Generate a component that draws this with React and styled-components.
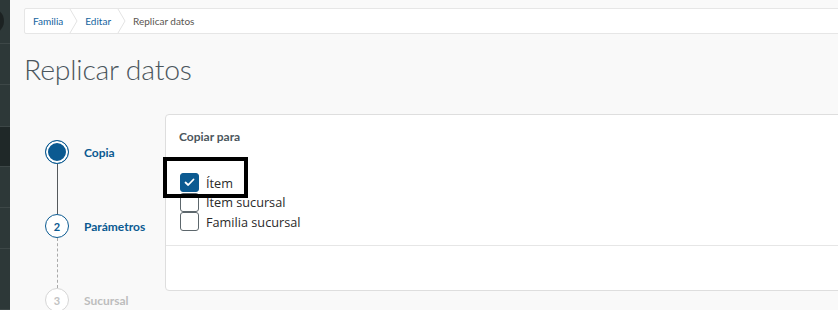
import React from "react";
import styled, { createGlobalStyle } from "styled-components";

const Global = createGlobalStyle`
  html, body { margin: 0; padding: 0; background: #f9f9f9; overflow: hidden; }
  body { font-family: "Lato", "Open Sans", sans-serif; width: 838px; height: 310px; }
  * { box-sizing: border-box; }
`;

const Shell = styled.div`
  display: flex;
  width: 838px;
  height: 310px;
  overflow: hidden;
`;

const Sidebar = styled.nav`
  width: 10px;
  flex: none;
  background: #2d3838;
  display: flex;
  flex-direction: column;
  position: relative;
  overflow: hidden;
`;

const SideItem = styled.div`
  height: ${(p) => p.$h}px;
  flex: none;
  background: ${(p) => (p.$active ? "#1f2828" : "#2d3838")};
  border-bottom: 1px solid #3d4747;
`;

const Avatar = styled.span`
  position: absolute;
  left: -22px;
  top: 8px;
  width: 26px;
  height: 26px;
  border-radius: 50%;
  background: #1c2222;
`;

const Main = styled.main`
  flex: 1;
  padding: 8px 0 0 14px;
  display: flex;
  flex-direction: column;
  margin-right: -6px;
`;

const Breadcrumb = styled.ol`
  list-style: none;
  margin: 0;
  padding: 0 0 0 8px;
  height: 26px;
  background: #fff;
  border: 1px solid #e6e6e6;
  border-radius: 2px;
  display: flex;
  align-items: center;
  font-size: 10px;
`;

const Crumb = styled.li`
  display: flex;
  align-items: center;
  color: ${(p) => (p.$current ? "#5a5650" : "#1464a0")};
  height: 100%;
`;

const Chevron = styled.svg`
  width: 10px;
  height: 24px;
  margin: 0 6px 0 6px;
  flex: none;
`;

const Title = styled.h1`
  margin: 15px 0 0 0;
  font-weight: 300;
  font-size: 28.4px;
  line-height: 40px;
  color: #4b565d;
  letter-spacing: -0.2px;
`;

const Content = styled.div`
  display: flex;
  margin-top: 25px;
`;

const Stepper = styled.ol`
  list-style: none;
  margin: 26px 0 0 0;
  padding: 0 0 0 21px;
  width: 141px;
  flex: none;
  display: flex;
  flex-direction: column;
`;

const Step = styled.li`
  display: flex;
  align-items: center;
  gap: 15px;
`;

const Circle = styled.span`
  width: 24px;
  height: 24px;
  border-radius: 50%;
  flex: none;
  display: flex;
  align-items: center;
  justify-content: center;
  font-size: 11px;
  font-weight: 700;
  border: 1.5px solid ${(p) => (p.$state === "todo" ? "#d6d6d6" : "#0b5a91")};
  color: ${(p) => (p.$state === "todo" ? "#c2c2c2" : "#0b5a91")};
  background: ${(p) => (p.$state === "done" ? "#0b5a91" : "#fff")};
  box-shadow: ${(p) => (p.$state === "done" ? "inset 0 0 0 2px #fff" : "none")};
`;

const StepLabel = styled.span`
  font-size: 12px;
  font-weight: 700;
  color: ${(p) => (p.$state === "todo" ? "#bdbdbd" : "#0b5a91")};
`;

const Connector = styled.span`
  display: block;
  width: 0;
  height: 50px;
  margin-left: 11.5px;
  border-left: 1px ${(p) => (p.$dashed ? "dashed #a9a9a9" : "solid #55595c")};
`;

const Card = styled.section`
  flex: 1;
  background: #fff;
  border: 1px solid #dedede;
  border-radius: 4px;
  height: 177px;
  display: flex;
  flex-direction: column;
  position: relative;
`;

const CardBody = styled.div`
  padding: 14px 14px 0 13px;
  height: 131px;
  border-bottom: 1px solid #e6e6e6;
`;

const CardFooter = styled.div`
  flex: 1;
`;

const SectionLabel = styled.div`
  font-size: 12px;
  font-weight: 700;
  color: #4b565d;
  line-height: 16px;
`;

const Options = styled.div`
  margin-top: 28px;
  display: flex;
  flex-direction: column;
  padding-left: 1px;
`;

const Option = styled.label`
  display: flex;
  align-items: center;
  gap: 7px;
  height: 19.5px;
  font-family: "Open Sans", "Noto Sans", sans-serif;
  font-size: 12.7px;
  color: #2a2a2a;
`;

const Box = styled.span`
  width: 19px;
  height: 19px;
  flex: none;
  border-radius: 3px;
  border: 1px solid ${(p) => (p.$checked ? "#0b5a91" : "#5d676c")};
  background: ${(p) => (p.$checked ? "#0b5a91" : "#fff")};
  display: flex;
  align-items: center;
  justify-content: center;
`;

const Highlight = styled.div`
  position: absolute;
  left: -3px;
  top: 42px;
  width: 85px;
  height: 41px;
  border: 4px solid #000;
  pointer-events: none;
`;

const Check = () => (
  <svg width="11" height="9" viewBox="0 0 11 9">
    <polyline points="1.5,4.5 4.2,7 9.5,1.5" fill="none" stroke="#fff" strokeWidth="1.8" strokeLinecap="round" strokeLinejoin="round" />
  </svg>
);

const Sep = () => (
  <Chevron viewBox="0 0 10 24">
    <polyline points="1,0 8,12 1,24" fill="none" stroke="#e3e3e3" strokeWidth="1" />
  </Chevron>
);

const options = [
  { label: "Ítem", checked: true },
  { label: "Ítem sucursal", checked: false },
  { label: "Familia sucursal", checked: false },
];

export default function App() {
  return (
    <>
      <Global />
      <Shell>
        <Sidebar>
          <Avatar />
          <SideItem $h={44} />
          <SideItem $h={41} />
          <SideItem $h={42} />
          <SideItem $h={40} $active />
          <SideItem $h={41} />
          <SideItem $h={41} />
          <SideItem $h={61} />
        </Sidebar>
        <Main>
          <Breadcrumb>
            <Crumb>Familia</Crumb>
            <Sep />
            <Crumb>Editar</Crumb>
            <Sep />
            <Crumb $current>Replicar datos</Crumb>
          </Breadcrumb>
          <Title>Replicar datos</Title>
          <Content>
            <Stepper>
              <Step>
                <Circle $state="done" />
                <StepLabel>Copia</StepLabel>
              </Step>
              <Connector />
              <Step>
                <Circle $state="active">2</Circle>
                <StepLabel>Parámetros</StepLabel>
              </Step>
              <Connector $dashed />
              <Step>
                <Circle $state="todo">3</Circle>
                <StepLabel $state="todo">Sucursal</StepLabel>
              </Step>
            </Stepper>
            <Card>
              <CardBody>
                <SectionLabel>Copiar para</SectionLabel>
                <Options>
                  {options.map((o) => (
                    <Option key={o.label}>
                      <Box $checked={o.checked}>{o.checked && <Check />}</Box>
                      {o.label}
                    </Option>
                  ))}
                </Options>
              </CardBody>
              <CardFooter />
              <Highlight />
            </Card>
          </Content>
        </Main>
      </Shell>
    </>
  );
}
